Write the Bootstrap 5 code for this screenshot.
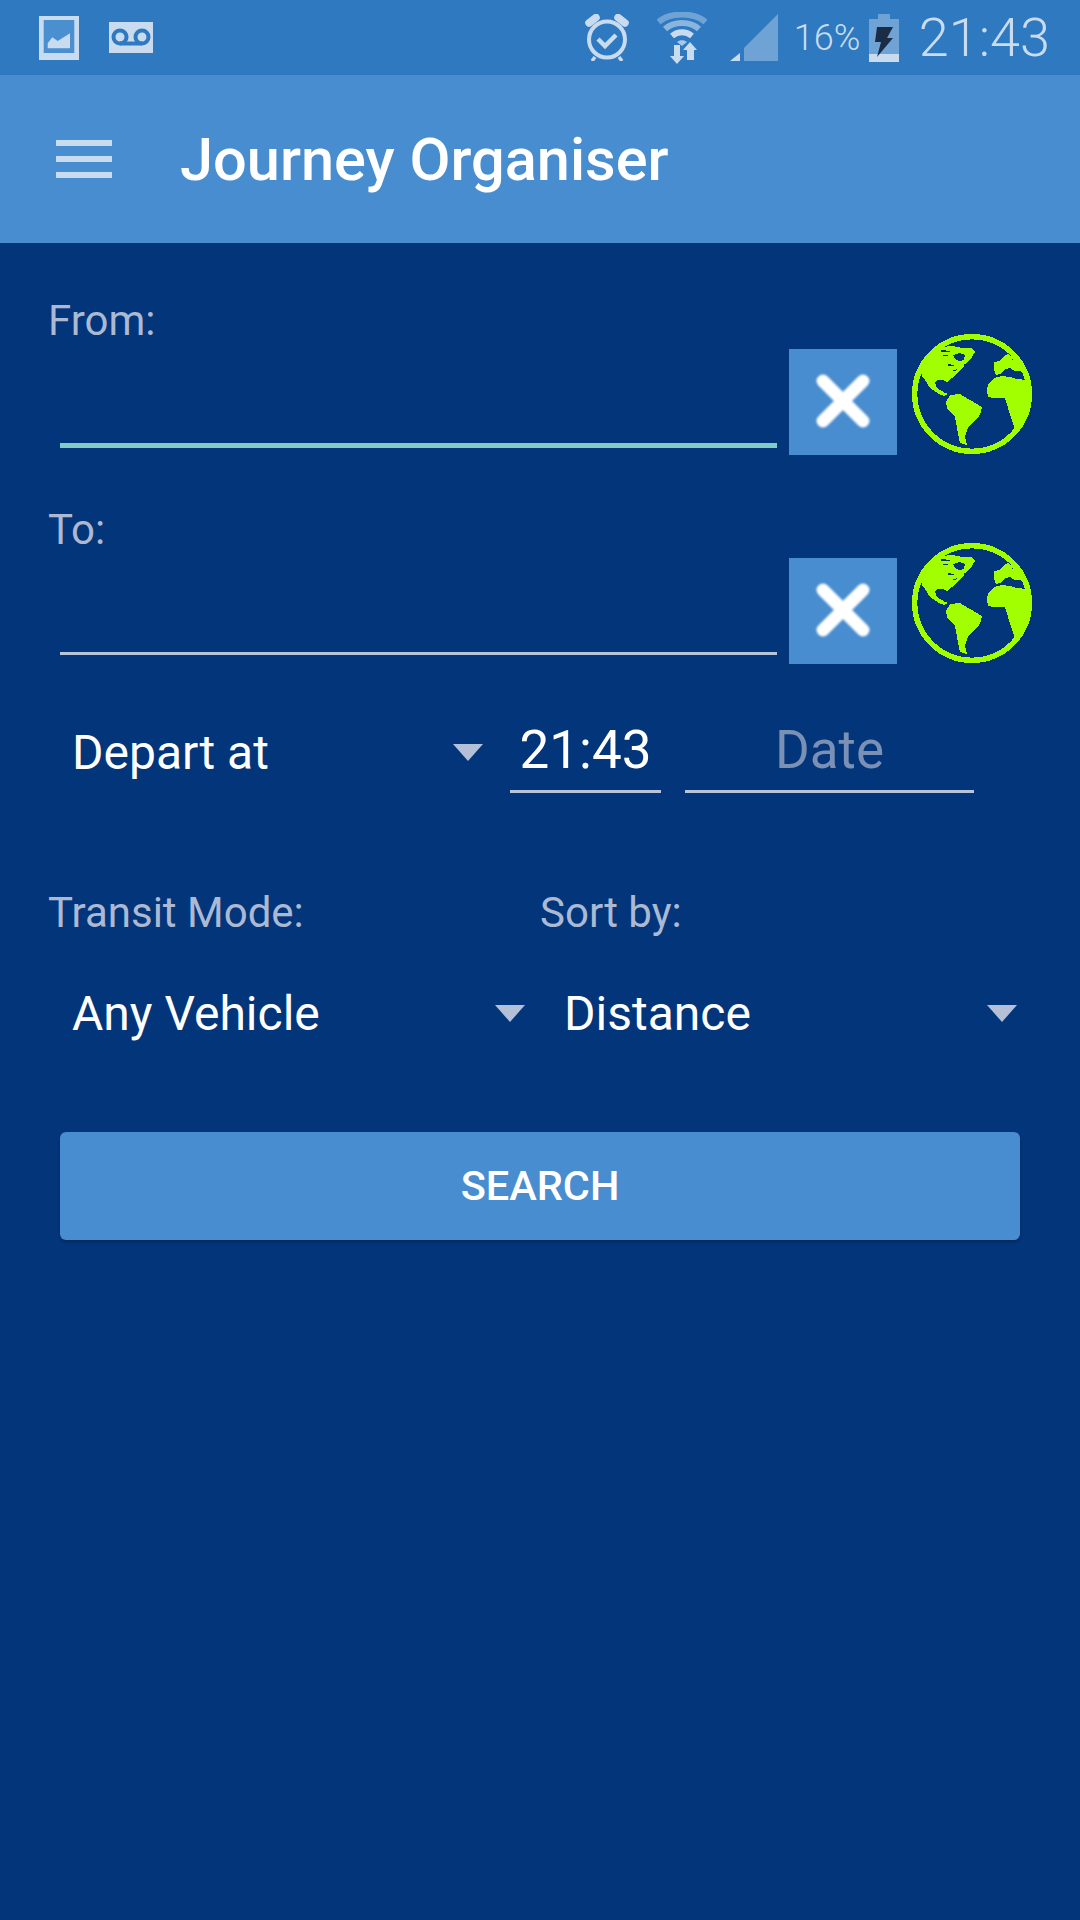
<!DOCTYPE html>
<html lang="en">
<head>
  <meta charset="UTF-8" />
  <meta name="viewport" content="width=device-width, initial-scale=1.0" />
  <title>Journey Organiser</title>
  <link rel="stylesheet" href="https://cdn.jsdelivr.net/npm/bootstrap@5.3.3/dist/css/bootstrap.min.css" />
  <style>
    body { background:#03357a; font-family:Roboto, "Liberation Sans", sans-serif; color:#fff; min-height:1920px; }
    .status-bar { height:75px; background:#2f79c1; color:#c9dcef; padding:0 30px 0 39px; }
    .ic-tape { margin-left:30px; }
    .ic-wifi { margin-left:28px; }
    .ic-signal { margin-left:23px; }
    .status-pct { font-size:36px; line-height:1; margin-left:16px; width:75px; font-weight:300; }
    .status-time { font-size:54px; line-height:1; font-weight:300; margin-left:20px; }
    .app-bar { height:168px; background:#488dcf; padding-left:56px; }
    .burger { width:56px; height:38px; }
    .burger span { display:block; height:6px; background:#c9dcef; }
    .app-title { font-size:59.5px; font-weight:500; line-height:1; margin-left:68px; padding-top:4px; }
    .form-wrap { padding-top:56px; }
    .field-label { color:#abb9d3; font-size:42px; line-height:44px; height:35px; padding-left:48px; }
    .field-row { height:121px; padding-left:60px; margin-bottom:53px; }
    .line-input { width:717px; height:5px; margin-bottom:7px; }
    .line-active { background:#7fcdc6; }
    .line-idle { height:3px; margin-bottom:9px; background:#b8c4da; }
    .clear-btn { width:108px; height:106px; margin-left:12px; background:#488dcf; border:0; border-radius:0; padding:0 0 3px; }
    .clear-btn svg { filter:blur(.8px); }
    .globe { width:120px; height:120px; margin-left:15px; margin-bottom:1px; }
    .time-row { height:76px; padding-left:60px; margin-bottom:102px; }
    .drop { padding:0 0 5px 12px; font-size:48px; line-height:1; }
    .drop-depart { width:423px; margin-right:27px; }
    .drop-mode { width:465px; margin-right:27px; }
    .drop-sort { width:465px; }
    .tri { width:0; height:0; border-left:15px solid transparent; border-right:15px solid transparent; border-top:17px solid #b3c0d8; }
    .time-cell { width:151px; height:76px; border-bottom:3px solid #b8c4da; font-size:53px; line-height:1; padding-bottom:7px; }
    .date-cell { width:289px; margin-left:24px; color:#7a90b5; }
    .label-row { height:36px; color:#abb9d3; font-size:42px; line-height:36px; padding-left:48px; margin-bottom:47px; }
    .label-col { width:492px; }
    .select-row { height:76px; padding-left:60px; margin-bottom:78px; }
    .search-btn { display:block; width:960px; height:108px; margin-left:60px; background:#488dcf; border:0; border-radius:6px; color:#fff; font-size:41.500px; font-weight:500; box-shadow:0 2px 3px rgba(0,0,0,.25); }
  </style>
</head>
<body>
  <svg width="0" height="0" class="d-block">
    <symbol id="earth" viewBox="0 0 120 120">
      <g shape-rendering="crispEdges">
      <circle cx="60" cy="60" r="57.300" fill="none" stroke="#a2ff00" stroke-width="5.400"/>
      <g fill="#a2ff00">
        <path d="M9 38 L16 25 L29 13 L41 12 L50 14 L59 14 L63 18 L60 23 L55 28 L52 32 L48 36 L44 40 L40 44 L35 48 L31 46 L26 46 L23 48 L25 54 L33 59 L36 60 L32 62 L27 60 L18 54 L13 46 L10 42 Z"/>
        <path d="M34 68 L38 61 L48 60 L58 66 L70 73 L69 78 L66 84 L60 89 L56 93 L53 103 L55 111 L48 109 L46 100 L45 93 L43 83 L35 74 Z"/>
        <path d="M75 56 L76 50 L82 44 L90 42 L98 43 L104 45 L116 46 L118 60 L112 82 L103 96 L99 83 L96 74 L93 64 L81 64 L76 63 Z"/>
        <path d="M82 36 L82 28 L88 27 L91 23 L96 20 L101 23 L100 27 L104 22 L110 30 L115 41 L108 37 L103 37 L98 34 L93 35 L88 40 L84 41 Z"/>
      </g>
      <g fill="#03357a">
        <path d="M41 21 L47 19 L53 21 L52 26 L47 27 L43 25 Z"/>
        <path d="M29 16 L38 17 L38 18 L29 18 Z M31 21 L36 21 L36 22 L31 22 Z M36 30 L42 31 L42 32 L36 32 Z M39 37 L45 35 L44 37 Z M50 31 L54 30 L53 32 Z"/>
      </g>
      </g>
    </symbol>
  </svg>

  <div class="status-bar d-flex align-items-center">
    <svg width="40" height="44" viewBox="0 0 40 44" aria-hidden="true"><rect width="40" height="44" fill="#c9dcef"/><rect x="4.700" y="4" width="30.600" height="33" fill="#4a8fd0"/><path d="M8.700 32.300 V27.300 L13.300 21.300 L18.700 25 L31 17.300 V32.300 Z" fill="#c9dcef"/></svg>
    <svg class="ic-tape" width="44" height="31" viewBox="0 0 44 31" aria-hidden="true"><rect width="44" height="31" fill="#c9dcef"/><g fill="none" stroke="#2f79c1" stroke-width="4"><circle cx="11" cy="15" r="6.500"/><circle cx="33" cy="15" r="6.500"/></g><rect x="11" y="19.500" width="22" height="4" fill="#2f79c1"/></svg>
    <div class="ms-auto d-flex align-items-center">
      <svg width="44" height="47" viewBox="0 0 44 47" aria-hidden="true"><g fill="none" stroke="#c9dcef"><circle cx="22" cy="25.500" r="18" stroke-width="4"/><path d="M13 25 L20 32 L31 21" stroke-width="4.500"/><path d="M4 9 L11 3.500" stroke-width="7.500" stroke-linecap="round"/><path d="M40 9 L33 3.500" stroke-width="7.500" stroke-linecap="round"/><path d="M10 43 L7 47 M34 43 L37 47" stroke-width="3.500"/></g></svg>
      <svg class="ic-wifi" width="50" height="52" viewBox="0 0 50 52" aria-hidden="true"><g fill="none"><path d="M1.500 10 C13 0 37 0 48.500 10" stroke="#6fa3d6" stroke-width="6"/><path d="M8 17 C17 9 33 9 42 17" stroke="#8ab5df" stroke-width="6"/><path d="M15 24 C21 19 29 19 35 24" stroke="#c9dcef" stroke-width="6"/></g><path d="M20 30 C22.500 27.500 27.500 27.500 30 30 L25 34 Z" fill="#a9c8e6"/><path d="M17 33 H23 V44 H27 L20 52 L13 44 H17 Z" fill="#c9dcef"/><path d="M30 48 H37 V38 H40 L33 30 L26 38 H30 Z" fill="#c9dcef"/></svg>
      <svg class="ic-signal" width="48" height="47" viewBox="0 0 48 47" aria-hidden="true"><path d="M14 47 V34 L48 0 V47 Z" fill="#6fa3d6"/><path d="M0 47 L10 39 V47 Z" fill="#c9dcef"/></svg>
      <div class="status-pct">16%</div>
      <svg width="30" height="48" viewBox="0 0 30 48" aria-hidden="true"><rect x="9" y="0" width="12" height="6" fill="#6fa3d6"/><rect y="5" width="30" height="43" fill="#6fa3d6"/><rect y="40" width="30" height="8" fill="#c9dcef"/><path d="M8 13 H24 L18 24 H24 L8 43 L12 28 H6 Z" fill="#1b2c45"/></svg>
      <div class="status-time">21:43</div>
    </div>
  </div>

  <div class="app-bar d-flex align-items-center">
    <div class="burger d-flex flex-column justify-content-between"><span></span><span></span><span></span></div>
    <div class="app-title">Journey Organiser</div>
  </div>

  <div class="form-wrap">
    <div class="field-label">From:</div>
    <div class="field-row d-flex align-items-end">
      <div class="line-input line-active"></div>
      <button class="clear-btn d-flex align-items-center justify-content-center" type="button" aria-label="Clear">
        <svg width="54" height="54" viewBox="0 0 54 54"><path d="M7 7 L47 47 M47 7 L7 47" stroke="#fff" stroke-width="13" stroke-linecap="round"/></svg>
      </button>
      <svg class="globe"><use href="#earth"/></svg>
    </div>

    <div class="field-label">To:</div>
    <div class="field-row d-flex align-items-end">
      <div class="line-input line-idle"></div>
      <button class="clear-btn d-flex align-items-center justify-content-center" type="button" aria-label="Clear">
        <svg width="54" height="54" viewBox="0 0 54 54"><path d="M7 7 L47 47 M47 7 L7 47" stroke="#fff" stroke-width="13" stroke-linecap="round"/></svg>
      </button>
      <svg class="globe"><use href="#earth"/></svg>
    </div>

    <div class="time-row d-flex">
      <div class="drop drop-depart d-flex justify-content-between align-items-center">Depart at<span class="tri"></span></div>
      <div class="time-cell d-flex align-items-center justify-content-center">21:43</div>
      <div class="time-cell date-cell d-flex align-items-center justify-content-center">Date</div>
    </div>

    <div class="label-row d-flex">
      <div class="label-col">Transit Mode:</div>
      <div>Sort by:</div>
    </div>

    <div class="select-row d-flex">
      <div class="drop drop-mode d-flex justify-content-between align-items-center">Any Vehicle<span class="tri"></span></div>
      <div class="drop drop-sort d-flex justify-content-between align-items-center">Distance<span class="tri"></span></div>
    </div>

    <button class="btn search-btn" type="button">SEARCH</button>
  </div>
  <script src="https://cdn.jsdelivr.net/npm/bootstrap@5.3.3/dist/js/bootstrap.bundle.min.js"></script>
</body>
</html>
